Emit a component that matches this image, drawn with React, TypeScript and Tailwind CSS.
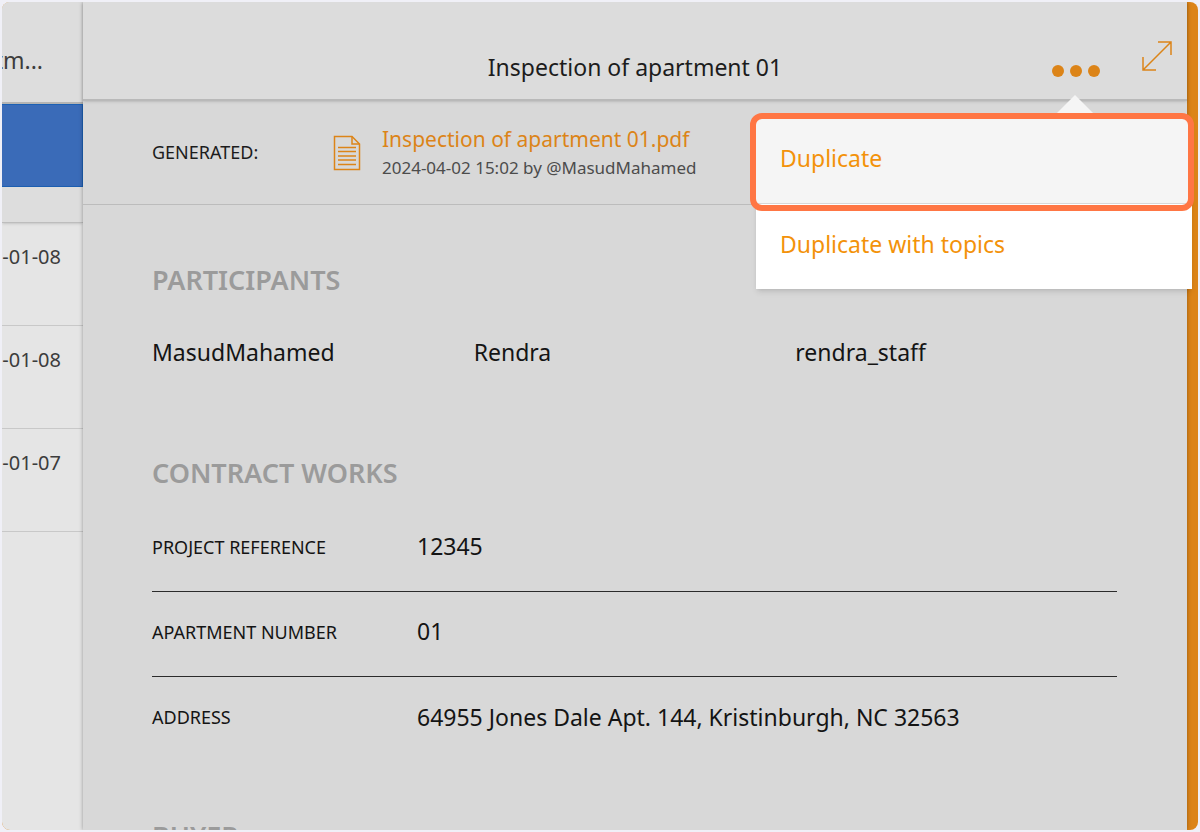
const dates = ["-01-08", "-01-08", "-01-07"];

const people = ["MasudMahamed", "Rendra", "rendra_staff"];

const works = [
    { label: "PROJECT REFERENCE", value: "12345" },
    { label: "APARTMENT NUMBER", value: "01" },
    { label: "ADDRESS", value: "64955 Jones Dale Apt. 144, Kristinburgh, NC 32563" },
];

function DocIcon(){
    return(
        <svg width="28" height="36" viewBox="0 0 28 36" fill="none" stroke="#dc8418" strokeWidth="1.5" className="shrink-0">
            <path d="M1.5 1.5H19L26.5 9V34.5H1.5Z"/>
            <path d="M19 1.5V9H26.5"/>
            <path d="M5 12.5H23M5 16.5H23M5 21H23M5 25H23M5 29.5H23"/>
        </svg>
    )
}

function ExpandIcon(){
    return(
        <svg width="32" height="32" viewBox="0 0 32 32" fill="none" stroke="#dc8418" strokeWidth="1.5">
            <path d="M2 30L30 2M17 2H30V15M2 17V30H15"/>
        </svg>
    )
}

function Sidebar(){
    return(
        <aside className="w-[81px] shrink-0 bg-[#e5e5e5] text-[#3c3c3c]">
            <div className="h-[102px] flex justify-end items-center pt-4 pr-10 overflow-hidden bg-[#dddddd] border-b-2 border-[#b4b4b4] text-[23px]">
                <span>tm...</span>
            </div>
            <div className="h-[83px] bg-[#3a6bb8] border border-l-0 border-[#1c60b4]"></div>
            <div className="h-9 bg-[#dddddd] border-b border-[#bdbdbd] shadow-sm"></div>
            {dates.map((date, i) => (
                <div key={i} className="h-[103px] flex justify-end items-start pt-5 pr-[22px] overflow-hidden border-b border-[#c8c8c8] text-xl">
                    <span>{date}</span>
                </div>
            ))}
        </aside>
    )
}

function Menu(){
    return(
        <div className="absolute top-[93px] -right-[7px] w-[444px] z-10">
            {/* arrow */}
            <div className="flex justify-end pr-[100px]">
                <svg width="38" height="19" viewBox="0 0 38 19"><path d="M19 0L38 19H0Z" fill="#f5f5f5"/></svg>
            </div>
            <div className="relative pl-[6px] pr-[2px] pt-[5px]">
                <div className="flex flex-col bg-white shadow-md text-[#f3920a] text-[23px]">
                    <button className="h-[85px] px-6 pb-[6px] text-left bg-[#f5f5f5] border-b border-[#d8d8d8] cursor-pointer">Duplicate</button>
                    <button className="h-[85px] px-6 pb-1 text-left cursor-pointer">Duplicate with topics</button>
                </div>
                <div className="absolute inset-x-0 -top-px h-[98px] rounded-xl border-[6px] border-[#ff7644] pointer-events-none"></div>
            </div>
        </div>
    )
}

function Header(){
    return(
        <header className="relative h-[99px] pt-[34px] flex justify-center items-center bg-[#dcdcdc] border-b-2 border-[#b9b9b9] shadow-sm">
            <h1 className="text-[23px] text-[#1c1c1c]">Inspection of apartment 01</h1>
            <div className="absolute right-[14px] top-[38px] flex items-start gap-[41px]">
                <button aria-label="More" className="flex gap-[6px] pt-[25px] cursor-pointer">
                    <span className="size-3 rounded-full bg-[#dc8418]"></span>
                    <span className="size-3 rounded-full bg-[#dc8418]"></span>
                    <span className="size-3 rounded-full bg-[#dc8418]"></span>
                </button>
                <button aria-label="Expand" className="cursor-pointer"><ExpandIcon/></button>
            </div>
            <Menu/>
        </header>
    )
}

export default function App(){
    return(
        <div className="h-screen p-[2px] bg-[#f0f0f7] font-['Noto_Sans',sans-serif]">
            <div className="h-full flex rounded-lg overflow-hidden bg-[#dc8418]">
                <Sidebar/>
                <main className="flex-1 min-w-0 bg-[#d8d8d8] shadow-[0_0_4px_rgba(0,0,0,0.35)]">
                    <Header/>
                    {/* generated report */}
                    <div className="h-[104px] flex items-center px-[69px] border-b border-[#bcbcbc]">
                        <span className="w-[181px] pb-[2px] text-lg text-[#1c1c1c]">GENERATED:</span>
                        <DocIcon/>
                        <div className="pl-[21px] pb-[2px]">
                            <a href="#" className="block text-[21px] leading-8 text-[#dc8418]">Inspection of apartment 01.pdf</a>
                            <p className="text-[17px] leading-[26px] text-[#4c4c4c]">2024-04-02 15:02 by @MasudMahamed</p>
                        </div>
                    </div>
                    <div className="pl-[69px] pr-[70px] text-[#141414]">
                        <h2 className="pt-[55px] text-[27px] leading-10 font-semibold text-[#9b9b9b]">PARTICIPANTS</h2>
                        <div className="grid grid-cols-3 pt-[34px] text-[23px] leading-9">
                            {people.map((name) => <span key={name}>{name}</span>)}
                        </div>
                        <h2 className="pt-[83px] text-[27px] leading-10 font-semibold text-[#9b9b9b]">CONTRACT WORKS</h2>
                        <dl className="pt-[14px]">
                            {works.map((row) => (
                                <div key={row.label} className="h-[85px] flex items-center pb-[5px] border-b border-[#2b2b2b] last:border-b-0">
                                    <dt className="w-[265px] text-lg">{row.label}</dt>
                                    <dd className="text-[23px]">{row.value}</dd>
                                </div>
                            ))}
                        </dl>
                        <h2 className="pt-[54px] text-[27px] leading-10 font-semibold text-[#9b9b9b]">BUYER</h2>
                    </div>
                </main>
                <div className="w-[11px] shrink-0"></div>
            </div>
        </div>
    )
}
